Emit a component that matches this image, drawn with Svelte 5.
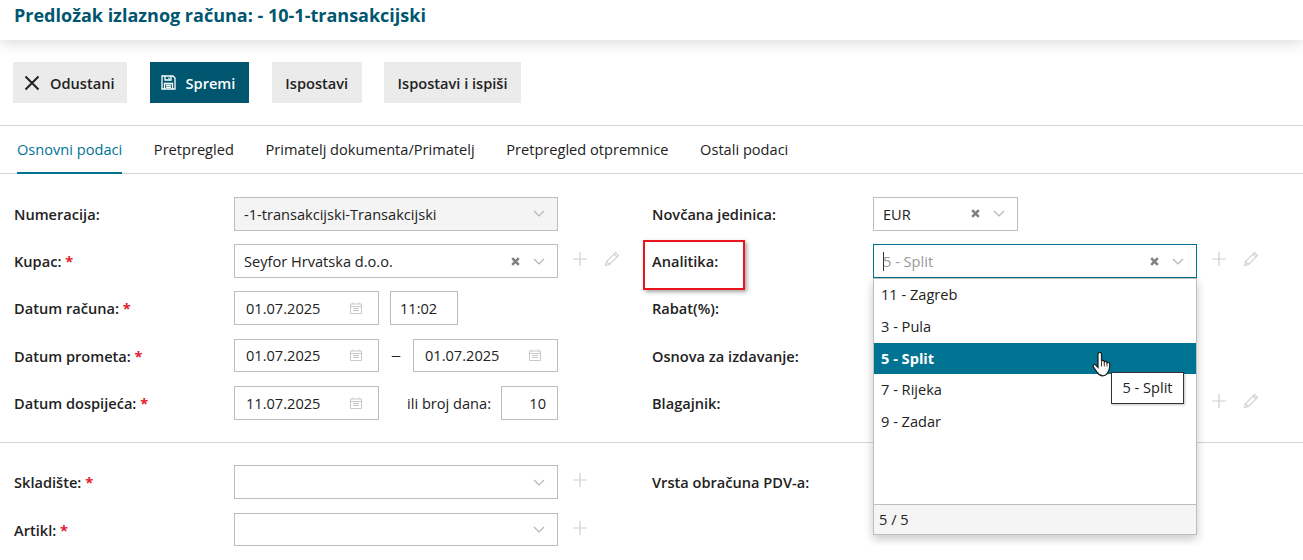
<script>
  const items = ['11 - Zagreb', '3 - Pula', '5 - Split', '7 - Rijeka', '9 - Zadar'];
  const tabs = ['Osnovni podaci', 'Pretpregled', 'Primatelj dokumenta/Primatelj', 'Pretpregled otpremnice', 'Ostali podaci'];
</script>

{#snippet chevron()}
  <svg class="chev" width="12" height="7" viewBox="0 0 12 7"><path d="M1 1l5 5 5-5" fill="none" stroke="#b4b4b4" stroke-width="1.2"/></svg>
{/snippet}
{#snippet clear()}
  <svg class="clr" width="9" height="9" viewBox="0 0 9 9"><path d="M1.2 1.2l6.6 6.6M7.8 1.2L1.2 7.8" stroke="#808080" stroke-width="2.6"/></svg>
{/snippet}
{#snippet plus()}
  <svg class="act" width="14" height="14" viewBox="0 0 14 14"><path d="M7 0v14M0 7h14" stroke="#d0d0d0" stroke-width="1.2"/></svg>
{/snippet}
{#snippet pencil()}
  <svg class="act" width="16" height="16" viewBox="0 0 16 16"><path d="M1.500 14.500l1-4L11.500 1.500l3 3-9 9zM2.500 10.500l3 3M10 3l3 3" fill="none" stroke="#d0d0d0" stroke-width="1.100"/></svg>
{/snippet}
{#snippet calendar()}
  <svg class="cal" width="12" height="12" viewBox="0 0 12 12"><path d="M.5 2h11v9.500H.5zM.5 4.500h11M3 .5V2M9 .5V2M3 6.500h6M3 8.500h6" fill="none" stroke="#c8c8c8"/></svg>
{/snippet}

<header class="top"><h1>Predložak izlaznog računa: - 10-1-transakcijski</h1></header>

<div class="toolbar">
  <button class="btn first">
    <svg width="16" height="16" viewBox="0 0 16 16"><path d="M1.500 1.500l13 13M14.500 1.500l-13 13" stroke="#222" stroke-width="2"/></svg>
    Odustani
  </button>
  <button class="btn primary">
    <svg width="15" height="15" viewBox="0 0 15 15"><path d="M1 1h11l2 2v11H1zM4 1v4h6V1M8 2.500v1.500M3.500 14V8.500h8V14M5 10.500h5M5 12.300h5" fill="none" stroke="#fff" stroke-width="1.300"/></svg>
    Spremi
  </button>
  <button class="btn">Ispostavi</button>
  <button class="btn">Ispostavi i ispiši</button>
</div>

<nav class="tabs">
  {#each tabs as t, i}
    <span class="tab" class:active={i === 0}>{t}</span>
  {/each}
</nav>

<main>
  <section class="grid first-block">
    <div class="col">
      <div class="row">
        <span class="lbl">Numeracija:</span>
        <div class="field wide disabled"><span class="val">-1-transakcijski-Transakcijski</span>{@render chevron()}</div>
      </div>
      <div class="row">
        <span class="lbl">Kupac: <i>*</i></span>
        <div class="field wide"><span class="val">Seyfor Hrvatska d.o.o.</span>{@render clear()}{@render chevron()}</div>
        <div class="acts">{@render plus()}{@render pencil()}</div>
      </div>
      <div class="row">
        <span class="lbl">Datum računa: <i>*</i></span>
        <div class="field date"><span class="val">01.07.2025</span>{@render calendar()}</div>
        <div class="field time"><span class="val">11:02</span></div>
      </div>
      <div class="row">
        <span class="lbl">Datum prometa: <i>*</i></span>
        <div class="field date"><span class="val">01.07.2025</span>{@render calendar()}</div>
        <span class="dash">–</span>
        <div class="field date"><span class="val">01.07.2025</span>{@render calendar()}</div>
      </div>
      <div class="row">
        <span class="lbl">Datum dospijeća: <i>*</i></span>
        <div class="field date"><span class="val">11.07.2025</span>{@render calendar()}</div>
        <span class="days">ili broj dana:</span>
        <div class="field num"><span class="val">10</span></div>
      </div>
    </div>
    <div class="col right">
      <div class="row">
        <span class="lbl">Novčana jedinica:</span>
        <div class="field cur"><span class="val">EUR</span>{@render clear()}{@render chevron()}</div>
      </div>
      <div class="row">
        <span class="lbl">Analitika:</span>
        <div class="field wide focus">
          <span class="caret"></span><span class="val ph">5 - Split</span>{@render clear()}{@render chevron()}
          <div class="drop">
            <ul>
              {#each items as it, i}
                <li class:sel={i === 2}>{it}</li>
              {/each}
            </ul>
            <div class="foot">5 / 5</div>
            <svg class="hand" width="20" height="26" viewBox="0 0 20 26"><path d="M6 2c0-2 3.500-2 3.500 0v7.500c0-1.400 2.800-1.400 2.800 0v1c0-1.400 2.700-1.400 2.700 0v1c0-1.400 2.600-1.400 2.700 .3 .2 3-.2 6-1.500 8-1 2.500-3 4-5.500 4-3 0-4.500-2-5.500-3.500L1.500 15c-1-1.800 1-3.200 2.300-2L6 15.500z" fill="#fff" stroke="#1c1c1c" stroke-width="1.200"/><path d="M9.500 9.500v5M12.300 10v4.500M15 11v3.500" stroke="#1c1c1c" stroke-width=".9"/></svg>
            <div class="tip">5 - Split</div>
          </div>
        </div>
        <div class="acts">{@render plus()}{@render pencil()}</div>
      </div>
      <div class="row"><span class="lbl">Rabat(%):</span></div>
      <div class="row"><span class="lbl">Osnova za izdavanje:</span></div>
      <div class="row">
        <span class="lbl">Blagajnik:</span>
        <div class="ghost"></div>
        <div class="acts">{@render plus()}{@render pencil()}</div>
      </div>
      <div class="mark"></div>
    </div>
  </section>

  <hr />

  <section class="grid">
    <div class="col">
      <div class="row">
        <span class="lbl">Skladište: <i>*</i></span>
        <div class="field wide"><span class="val"></span>{@render chevron()}</div>
        <div class="acts">{@render plus()}</div>
      </div>
      <div class="row">
        <span class="lbl">Artikl: <i>*</i></span>
        <div class="field wide"><span class="val"></span>{@render chevron()}</div>
        <div class="acts">{@render plus()}</div>
      </div>
    </div>
    <div class="col right">
      <div class="row"><span class="lbl">Vrsta obračuna PDV-a:</span></div>
    </div>
  </section>
</main>

<style>
  :global(body) {
    margin: 0;
    background: #fff;
    font-family: "Open Sans", sans-serif;
    font-size: 14.6px;
    color: #222;
    overflow: hidden;
  }
  .top {
    height: 40px;
    box-shadow: 0 4px 14px rgba(0, 0, 0, 0.13);
    position: relative;
  }
  h1 {
    margin: 0;
    padding: 4px 0 0 14px;
    font-size: 18px;
    font-weight: 700;
    line-height: 22px;
    color: #00566f;
  }
  .toolbar {
    display: flex;
    padding: 22px 0 22px 13px;
    border-bottom: 1px solid #d6d6d6;
  }
  .btn {
    height: 41px;
    border: 0;
    background: #ebebeb;
    font: 600 14.6px "Open Sans", sans-serif;
    color: #222;
    padding: 0 13.500px;
    margin-right: 22.500px;
    display: flex;
    align-items: center;
    gap: 10px;
  }
  .btn.first { padding-left: 11px; padding-right: 12.500px; }
  .btn.primary { background: #00566f; color: #fff; padding: 0 13.500px 0 11px; margin-right: 23px; }
  .tabs {
    display: flex;
    gap: 31.700px;
    height: 47px;
    padding-left: 17px;
    border-bottom: 1px solid #d6d6d6;
  }
  .tab {
    line-height: 47px;
    height: 47px;
    color: #222;
  }
  .tab.active {
    color: #007393;
    border-bottom: 2px solid #007393;
    box-sizing: border-box;
    height: 48px;
  }
  main { padding-top: 23px; }
  .grid { display: grid; grid-template-columns: 652px 1fr; }
  .col { display: flex; flex-direction: column; gap: 13.400px; position: relative; }
  .row { display: flex; align-items: flex-start; height: 33.800px; }
  .lbl {
    width: 234px;
    padding-left: 14px;
    box-sizing: border-box;
    font-weight: 600;
    line-height: 35px;
    flex: none;
  }
  .right .lbl { width: 221px; padding-left: 0; }
  .lbl i { color: #e0202c; font-style: normal; font-weight: 700; }
  .field {
    border: 1px solid #bdbdbd;
    box-sizing: border-box;
    height: 33.800px;
    display: flex;
    align-items: center;
    position: relative;
    background: #fff;
    flex: none;
  }
  .val { flex: 1; padding-left: 9px; white-space: nowrap; }
  .wide { width: 324px; }
  .disabled { background: #f4f4f4; }
  .chev { margin: 0 12px 0 9px; flex: none; }
  .clr { flex: none; margin-right: 4px; }
  .date { width: 145px; }
  .date .val { padding-left: 11px; }
  .cal { margin-right: 16px; flex: none; }
  .time { width: 68px; margin-left: 11px; }
  .dash { width: 34px; text-align: center; font-size: 20px; font-weight: 300; line-height: 31px; flex: none; }
  .days { width: 122px; text-align: right; padding-right: 10px; box-sizing: border-box; line-height: 34px; flex: none; }
  .num { width: 57px; }
  .num .val { text-align: right; padding-right: 11px; }
  .cur { width: 145px; }
  .focus { border-color: #007393; }
  .caret { position: absolute; left: 9px; top: 7px; height: 19px; width: 1px; background: #333; }
  .ph { color: #999; }
  .acts { display: flex; align-items: center; gap: 17px; margin-left: 15px; height: 30px; }
  .ghost { width: 324px; flex: none; }
  .drop {
    position: absolute;
    left: -1px;
    top: 33px;
    width: 324px;
    height: 257px;
    box-sizing: border-box;
    border: 1px solid #bdbdbd;
    background: #fff;
    box-shadow: 0 4px 9px rgba(0, 0, 0, 0.22);
    z-index: 5;
    display: flex;
    flex-direction: column;
  }
  ul { list-style: none; margin: 0; padding: 0; flex: 1; }
  li { height: 31.700px; line-height: 31.700px; padding-left: 7px; }
  li.sel { background: #007393; color: #fff; font-weight: 700; }
  .foot {
    height: 30px;
    line-height: 29px;
    padding-left: 5px;
    background: #f5f5f5;
    border-top: 1px solid #bdbdbd;
    box-sizing: border-box;
  }
  .hand { position: absolute; left: 218px; top: 73px; }
  .tip {
    position: absolute;
    left: 237px;
    top: 93px;
    width: 73px;
    height: 32px;
    box-sizing: border-box;
    border: 1px solid #333;
    background: #fff;
    text-align: center;
    line-height: 29px;
    box-shadow: 1px 1px 2px rgba(0, 0, 0, 0.25);
  }
  .mark {
    position: absolute;
    left: -9px;
    top: 43px;
    width: 102px;
    height: 50px;
    border: 2px solid #e8161c;
    box-sizing: border-box;
    box-shadow: 2px 2px 4px rgba(0, 0, 0, 0.35);
  }
  hr {
    border: 0;
    border-top: 1px solid #d6d6d6;
    margin: 22px 0 22.800px;
  }
</style>
